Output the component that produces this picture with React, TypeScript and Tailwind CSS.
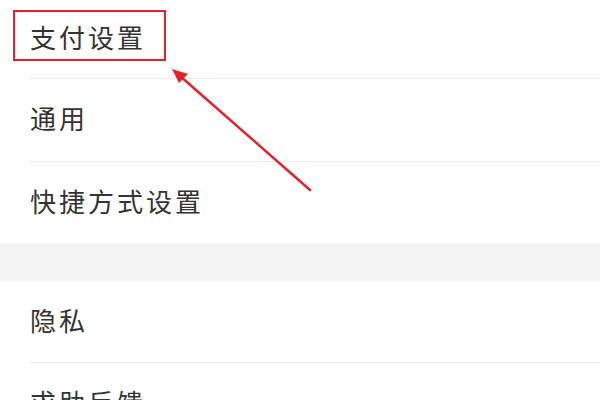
const font = { fontFamily: '"Noto Sans CJK SC", "Noto Sans", sans-serif' };

function Row({ label, className }: { label: string; className: string }) {
  return (
    <div className={`flex items-center pl-[30px] pb-[5px] ${className}`}>
      <span className="text-[26px] tracking-[3px] text-[#333333]">{label}</span>
    </div>
  );
}

function Divider() {
  return <div className="ml-[29px] h-px bg-[#efefef]" />;
}

export default function App() {
  return (
    <div className="relative h-[400px] w-[600px] overflow-hidden bg-white" style={font}>
      <Row label="支付设置" className="h-[78px]" />
      <Divider />
      <Row label="通用" className="h-[82px]" />
      <Divider />
      <Row label="快捷方式设置" className="h-[81px]" />
      <div className="h-[38px] bg-[#f3f3f3]" />
      <Row label="隐私" className="h-[81px]" />
      <Divider />
      <Row label="求助反馈" className="h-[82px]" />

      {/* annotation */}
      <div className="absolute left-[13px] top-[10px] h-[51px] w-[153px] border-2 border-[#e5212a]" />
      <svg className="absolute left-0 top-0" width="600" height="400" viewBox="0 0 600 400">
        <line x1="310" y1="190" x2="180" y2="76" stroke="#e5212a" strokeWidth="2.5" strokeLinecap="round" />
        <polygon points="172,69 188,74 179,83" fill="#e5212a" />
      </svg>
    </div>
  );
}
